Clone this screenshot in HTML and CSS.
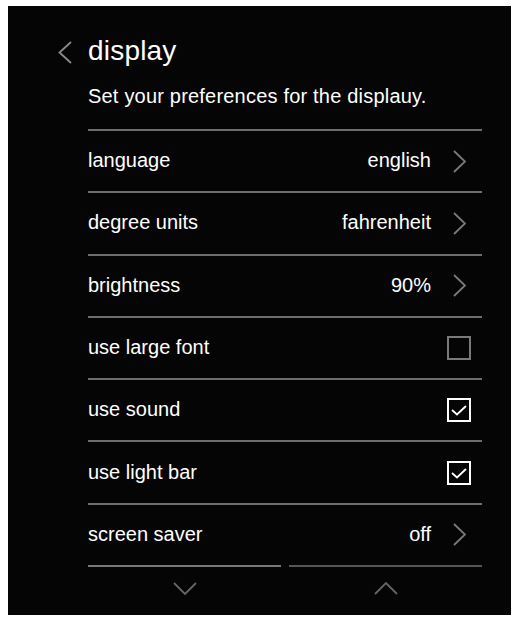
FILE: index.html
```html
<!DOCTYPE html>
<html>
<head>
<meta charset="utf-8">
<link rel="stylesheet" href="styles.css">
</head>
<body>
<div class="panel">
  <div class="header">
    <svg class="back" width="14" height="23" viewBox="0 0 14 23"><polyline points="13,1 1.5,11.5 13,22" /></svg>
    <h1 class="title">display</h1>
  </div>
  <p class="subtitle">Set your preferences for the displauy.</p>
  <div class="list">
    <div class="row">
      <span class="label">language</span>
      <span class="right"><span class="value">english</span><svg class="chev" width="13" height="23" viewBox="0 0 13 23"><polyline points="1,1 12,11.5 1,22" /></svg></span>
    </div>
    <div class="row">
      <span class="label">degree units</span>
      <span class="right"><span class="value">fahrenheit</span><svg class="chev" width="13" height="23" viewBox="0 0 13 23"><polyline points="1,1 12,11.5 1,22" /></svg></span>
    </div>
    <div class="row">
      <span class="label">brightness</span>
      <span class="right"><span class="value">90%</span><svg class="chev" width="13" height="23" viewBox="0 0 13 23"><polyline points="1,1 12,11.5 1,22" /></svg></span>
    </div>
    <div class="row">
      <span class="label">use large font</span>
      <svg class="box off" width="24" height="24" viewBox="0 0 24 24"><rect x="1" y="1" width="22" height="22" /></svg>
    </div>
    <div class="row">
      <span class="label">use sound</span>
      <svg class="box on" width="24" height="24" viewBox="0 0 24 24"><rect x="1" y="1" width="22" height="22" /><polyline points="5,12 10,16.5 19,8" /></svg>
    </div>
    <div class="row">
      <span class="label">use light bar</span>
      <svg class="box on" width="24" height="24" viewBox="0 0 24 24"><rect x="1" y="1" width="22" height="22" /><polyline points="5,12 10,16.5 19,8" /></svg>
    </div>
    <div class="row">
      <span class="label">screen saver</span>
      <span class="right"><span class="value">off</span><svg class="chev" width="13" height="23" viewBox="0 0 13 23"><polyline points="1,1 12,11.5 1,22" /></svg></span>
    </div>
  </div>
  <div class="footer">
    <div class="pager left"><svg class="arrow" width="24" height="13" viewBox="0 0 24 13"><polyline points="1,1 12,12 23,1" /></svg></div>
    <div class="pager right-pager"><svg class="arrow" width="24" height="13" viewBox="0 0 24 13"><polyline points="1,12 12,1 23,12" /></svg></div>
  </div>
</div>
</body>
</html>
```
FILE: styles.css
```css
html, body {
  margin: 0;
  padding: 0;
  background: #ffffff;
}

body {
  font-family: "Liberation Sans", Arial, sans-serif;
  color: #ffffff;
}

.panel {
  margin: 6px 0 0 8px;
  width: 503px;
  height: 609px;
  background: #050505;
  box-sizing: border-box;
  padding: 28px 29px 0 80px;
}

.header {
  display: flex;
  align-items: center;
  gap: 16px;
  margin-left: -30px;
  height: 34px;
}

.back {
  fill: none;
  stroke: #8a8a8a;
  stroke-width: 1.8;
  margin-top: 3px;
}

.title {
  margin: 0;
  font-size: 28px;
  font-weight: normal;
  line-height: 34px;
  letter-spacing: 0.2px;
}

.subtitle {
  margin: 15px 0 20px 0;
  font-size: 20px;
  line-height: 26px;
  letter-spacing: 0.2px;
}

.row {
  display: flex;
  align-items: center;
  justify-content: space-between;
  height: 60.3px;
  border-top: 2px solid #6e6e6e;
}

.label, .value {
  font-size: 20px;
  line-height: 56px;
  padding-bottom: 2px;
}

.right {
  display: flex;
  align-items: center;
}

.chev {
  fill: none;
  stroke: #7a7a7a;
  stroke-width: 1.8;
  margin-left: 22px;
  margin-right: 16px;
}

.box {
  margin-right: 11px;
  fill: none;
  stroke-width: 2;
}

.box.off {
  stroke: #7a7a7a;
}

.box.on {
  stroke: #ffffff;
}

.box.on polyline {
  stroke-width: 1.8;
}

.footer {
  display: grid;
  grid-template-columns: 193px 193px;
  column-gap: 8px;
}

.pager {
  display: flex;
  justify-content: center;
  padding-top: 15px;
}

.pager.left {
  border-top: 2px solid #787878;
}

.pager.right-pager {
  border-top: 2px solid #565656;
}

.arrow {
  fill: none;
  stroke: #666666;
  stroke-width: 1.8;
}
```
